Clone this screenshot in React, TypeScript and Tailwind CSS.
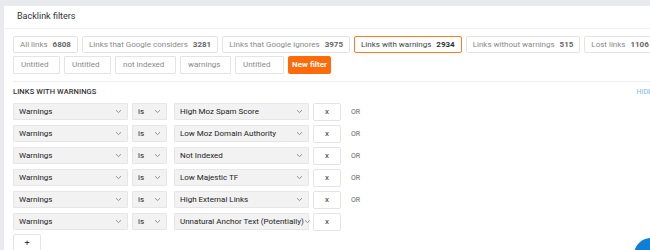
import React from 'react';

const tabs = [
  { label: 'All links', count: 6808 },
  { label: 'Links that Google considers', count: 3281 },
  { label: 'Links that Google ignores', count: 3975 },
  { label: 'Links with warnings', count: 2934, active: true },
  { label: 'Links without warnings', count: 515 },
  { label: 'Lost links', count: 1106 },
];

const savedFilters = [
  { name: 'Untitled', w: 'w-[47px]' },
  { name: 'Untitled', w: 'w-[47px]' },
  { name: 'not indexed', w: 'w-[61px]' },
  { name: 'warnings', w: 'w-[51px]' },
  { name: 'Untitled', w: 'w-[49px]' },
];

const warnings = [
  'High Moz Spam Score',
  'Low Moz Domain Authority',
  'Not Indexed',
  'Low Majestic TF',
  'High External Links',
  'Unnatural Anchor Text (Potentially)',
];

const Chevron = () => (
  <svg width="7" height="5" viewBox="0 0 7 5" className="shrink-0">
    <path d="M1 1.2 L3.5 3.6 L6 1.2" fill="none" stroke="#888" strokeWidth="0.9" />
  </svg>
);

const Select: React.FC<{ value: string; width: string }> = ({ value, width }) => (
  <div
    className={`${width} h-[17px] flex items-center justify-between pl-[5px] pr-[5px] bg-[#f2f2f2] border border-[#e6e6e6] rounded-[1px] text-[8px] text-[#222] whitespace-nowrap`}
  >
    <span>{value}</span>
    <Chevron />
  </div>
);

export default function App() {
  return (
    <div
      className="relative w-[650px] h-[250px] overflow-hidden bg-[#e9eaee] pt-[6px] pl-[4px]"
      style={{ fontFamily: 'Roboto, "Liberation Sans", sans-serif' }}
    >
      <div className="w-[660px] h-[260px] bg-white">
        <div className="h-[23px] flex items-center px-[13px] border-b border-[#efefef] text-[9px] text-[#333]">
          Backlink filters
        </div>

        <div className="px-[9px] pt-[7px]">
          <div className="flex gap-[4px] whitespace-nowrap">
            {tabs.map(t => (
              <div
                key={t.label}
                className={`h-[17px] flex items-center gap-[5px] px-[6px] rounded-[2px] border text-[8px] ${
                  t.active ? 'border-[#ff7a1f] text-[#444]' : 'border-[#e4e4e4] text-[#8a8a8a]'
                }`}
              >
                <span>{t.label}</span>
                <span className={`font-bold ${t.active ? 'text-[#333]' : 'text-[#666]'}`}>{t.count}</span>
              </div>
            ))}
          </div>

          <div className="flex gap-[4px] mt-[3px]">
            {savedFilters.map((f, i) => (
              <div
                key={i}
                className={`${f.w} h-[18px] flex items-center pl-[7px] border border-[#e4e4e4] rounded-[1px] text-[8px] text-[#8a8a8a] whitespace-nowrap`}
              >
                {f.name}
              </div>
            ))}
            <div className="w-[43px] h-[18px] flex items-center justify-center rounded-[2px] bg-[#ff6a0a] text-white text-[8px] font-bold whitespace-nowrap">
              New filter
            </div>
          </div>

          <div className="mt-[7px] border-t border-[#f0f0f0]" />

          <div className="flex items-center justify-between mt-[5px] h-[10px]">
            <span className="text-[7.5px] font-medium text-[#333] tracking-[0.1px]">LINKS WITH WARNINGS</span>
            <span className="text-[7px] text-[#7cb7ea] mr-[3px]">HIDE</span>
          </div>

          <div className="flex flex-col gap-[5px] mt-[6px]">
            {warnings.map((w, i) => (
              <div key={w} className="flex items-center h-[17px]">
                <Select value="Warnings" width="w-[115px]" />
                <div className="ml-[4px]">
                  <Select value="is" width="w-[35px]" />
                </div>
                <div className="ml-[7px]">
                  <Select value={w} width="w-[135px]" />
                </div>
                <div className="ml-[4px] w-[28px] h-[18px] flex items-center justify-center border border-[#e4e4e4] rounded-[2px] text-[8px] text-[#333]">
                  x
                </div>
                {i < warnings.length - 1 && (
                  <span className="ml-[10px] mt-[1px] text-[7px] text-[#666]">OR</span>
                )}
              </div>
            ))}
          </div>

          <div className="mt-[4px] w-[28px] h-[20px] flex items-center justify-center border border-[#e4e4e4] rounded-[2px] text-[9px] text-[#333]">
            +
          </div>
        </div>
      </div>

      <div className="absolute left-[634px] top-[238px] w-[34px] h-[34px] rounded-full bg-[#0e7fd9]" />
    </div>
  );
}
